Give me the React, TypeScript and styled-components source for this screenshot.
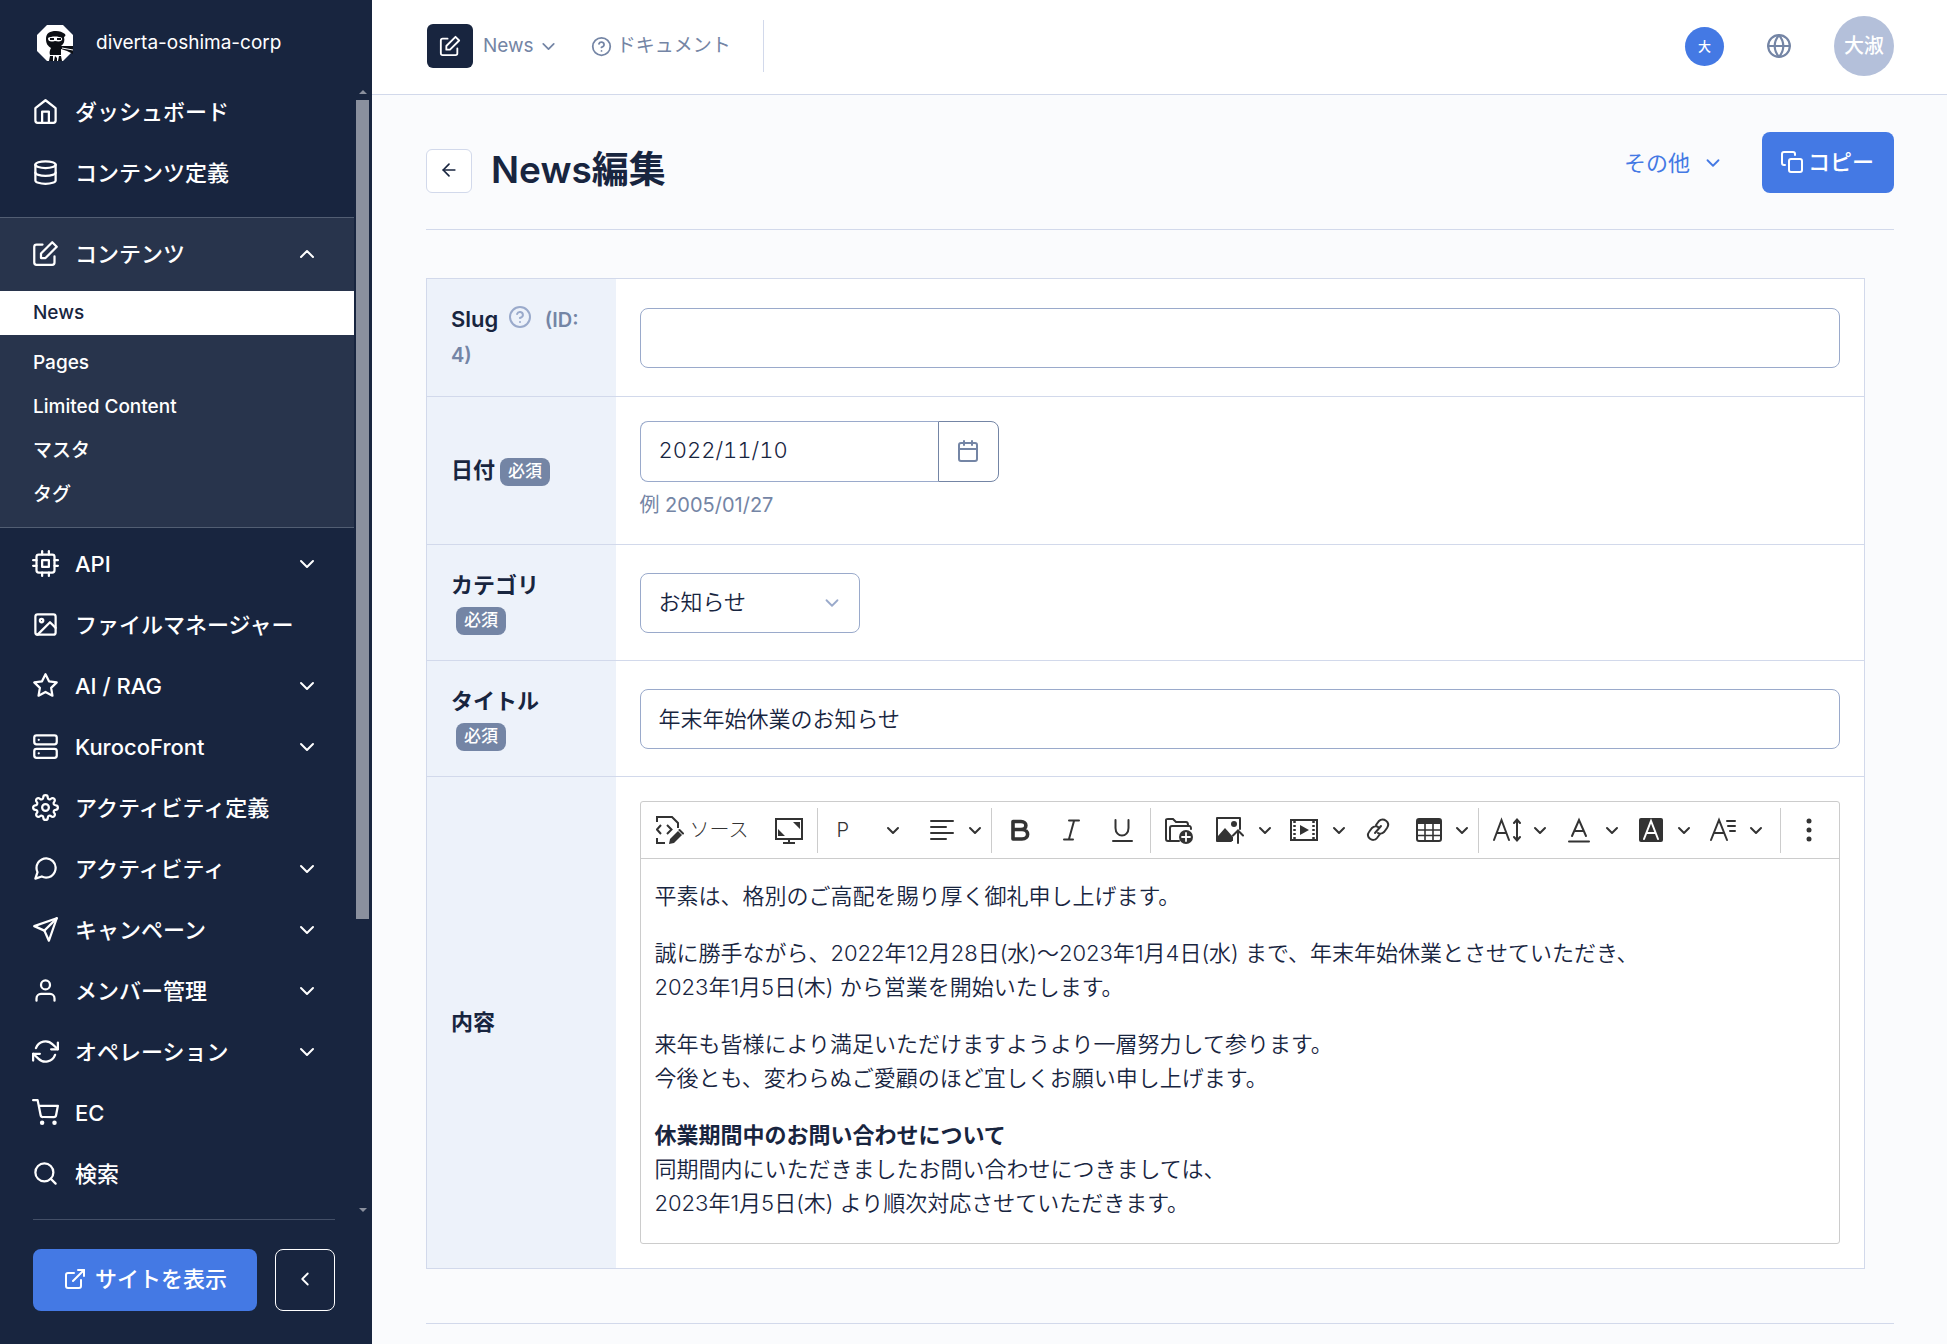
import React from "react";
import styled, { createGlobalStyle, css } from "styled-components";
import {
  FiArrowLeft,
  FiCalendar,
  FiChevronDown,
  FiChevronLeft,
  FiChevronUp,
  FiCopy,
  FiCpu,
  FiDatabase,
  FiExternalLink,
  FiGlobe,
  FiHelpCircle,
  FiHome,
  FiImage,
  FiMessageCircle,
  FiRefreshCw,
  FiSearch,
  FiSend,
  FiServer,
  FiSettings,
  FiShoppingCart,
  FiStar,
  FiUser,
} from "react-icons/fi";

const color = {
  navy: "#18253f",
  navyLight: "#28344c",
  blue: "#4479e4",
  slate: "#7485a5",
  line: "#d2d9eb",
  field: "#9aaacb",
  page: "#fafbfd",
  labelBg: "#edf2fa",
  editorLine: "#cccccc",
  tool: "#333333",
};

const GlobalStyle = createGlobalStyle`
  *, *::before, *::after { box-sizing: border-box; }
  body {
    margin: 0;
    background: ${color.page};
    color: ${color.navy};
    font-family: Inter, "Noto Sans CJK JP", sans-serif;
    font-size: 22px;
    line-height: 34px;
  }
  button, input, select { font: inherit; color: inherit; }
  button { cursor: pointer; }
  a { color: inherit; text-decoration: none; }
  svg { display: block; flex: none; }
`;

const Layout = styled.div`
  display: grid;
  grid-template-columns: 372px minmax(0, 1fr);
  min-height: 100vh;
`;

/* ---------- Sidebar ---------- */

const Sidebar = styled.aside`
  position: sticky;
  top: 0;
  height: 100vh;
  display: flex;
  flex-direction: column;
  background: ${color.navy};
  color: #fff;
`;

const Brand = styled.a`
  display: flex;
  align-items: center;
  gap: 22px;
  flex: none;
  height: 82px;
  padding: 4px 36px 0;
  font-size: 19px;
  line-height: 28px;
`;

const NavArea = styled.div`
  display: flex;
  flex: 1;
  min-height: 0;
`;

const Nav = styled.nav`
  flex: 1;
  min-width: 0;
  overflow: hidden;
  font-weight: 500;
`;

const NavRow = styled.a<{ $tall?: boolean }>`
  display: flex;
  align-items: center;
  gap: 16px;
  height: ${(p) => (p.$tall ? 73 : 61)}px;
  padding: 0 35px 2px 32px;
  svg:first-child { width: 27px; height: 27px; }
  svg:last-child:not(:first-child) { width: 24px; height: 24px; }
`;

const NavText = styled.span`
  flex: 1;
  white-space: nowrap;
`;

const OpenSection = styled.section`
  margin: 13px 0 6px;
  padding-bottom: 10px;
  background: ${color.navyLight};
  border-top: 1px solid #525e73;
  border-bottom: 1px solid #525e73;
`;

const SubLink = styled.a<{ $active?: boolean }>`
  display: block;
  padding: 0 33px;
  font-size: 19px;
  line-height: 44px;
  ${(p) =>
    p.$active &&
    css`
      margin-bottom: 6px;
      background: #fff;
      color: ${color.navy};
    `}
`;

const ScrollTrack = styled.div`
  display: flex;
  flex-direction: column;
  align-items: center;
  width: 18px;
  padding: 8px 2px 7px 1px;
`;

const ScrollThumb = styled.div`
  width: 13px;
  height: 73%;
  margin: 6px 0 auto;
  background: #8a909e;
`;

const SidebarFooter = styled.footer`
  display: flex;
  gap: 18px;
  flex: none;
  margin: 0 37px 0 33px;
  padding: 29px 0 33px;
  border-top: 1px solid #434f67;
`;

const PrimaryLink = styled.a`
  display: flex;
  align-items: center;
  justify-content: center;
  gap: 8px;
  flex: 1;
  height: 62px;
  padding-bottom: 2px;
  border-radius: 8px;
  background: ${color.blue};
  font-weight: 500;
`;

const CollapseButton = styled.button`
  display: grid;
  place-items: center;
  width: 60px;
  height: 62px;
  padding: 0 0 2px;
  border: 1px solid #fff;
  border-radius: 8px;
  background: transparent;
`;

/* ---------- Top bar ---------- */

const Main = styled.div`
  min-width: 0;
`;

const TopBar = styled.header`
  display: flex;
  align-items: center;
  justify-content: space-between;
  height: 95px;
  padding: 0 53px 2px 55px;
  border-bottom: 1px solid ${color.line};
  background: #fff;
  color: ${color.slate};
  font-size: 19px;
`;

const TopGroup = styled.div<{ $gap: number }>`
  display: flex;
  align-items: center;
  gap: ${(p) => p.$gap}px;
`;

const AppBadge = styled.span`
  display: grid;
  place-items: center;
  width: 46px;
  height: 44px;
  border-radius: 6px;
  background: ${color.navy};
  color: #fff;
`;

const PlainButton = styled.button`
  display: flex;
  align-items: center;
  gap: 4px;
  padding: 0;
  border: 0;
  background: none;
`;

const DocLink = styled.a`
  display: flex;
  align-items: center;
  gap: 5px;
  height: 52px;
  padding-right: 32px;
  border-right: 1px solid ${color.line};
`;

const Circle = styled.button<{ $size: number; $bg: string; $font: number }>`
  display: grid;
  place-items: center;
  width: ${(p) => p.$size}px;
  height: ${(p) => p.$size}px;
  padding: 0;
  border: 0;
  border-radius: 50%;
  background: ${(p) => p.$bg};
  color: #fff;
  font-size: ${(p) => p.$font}px;
  font-weight: 500;
  line-height: 24px;
`;

/* ---------- Page ---------- */

const Page = styled.main`
  padding: 37px 53px 19px 54px;
`;

const PageHead = styled.div`
  display: flex;
  align-items: flex-end;
  justify-content: space-between;
  padding-bottom: 36px;
  border-bottom: 1px solid ${color.line};
`;

const TitleGroup = styled.div`
  display: flex;
  align-items: center;
  gap: 19px;
`;

const BackButton = styled.button`
  display: grid;
  place-items: center;
  width: 46px;
  height: 44px;
  padding: 0 0 2px;
  border: 1px solid ${color.line};
  border-radius: 6px;
  background: #fff;
`;

const Title = styled.h1`
  margin: 0;
  padding-bottom: 2px;
  font-size: 37px;
  font-weight: 600;
  line-height: 42px;
`;

const Actions = styled.div`
  display: flex;
  align-items: center;
  gap: 38px;
`;

const OtherButton = styled(PlainButton)`
  gap: 12px;
  color: ${color.blue};
`;

const CopyButton = styled.button`
  display: flex;
  align-items: center;
  gap: 4px;
  height: 61px;
  padding: 0 20px 2px 18px;
  border: 0;
  border-radius: 8px;
  background: ${color.blue};
  color: #fff;
  font-weight: 500;
`;

const FormArea = styled.form`
  padding: 48px 29px 54px 0;
  border-bottom: 1px solid ${color.line};
`;

const FormTable = styled.table`
  width: 100%;
  table-layout: fixed;
  border-collapse: collapse;
  border: 1px solid ${color.line};
  background: #fff;
`;

const LabelCell = styled.th`
  width: 189px;
  padding: 23px 24px 24px;
  border-bottom: 1px solid ${color.line};
  background: ${color.labelBg};
  font-weight: 600;
  text-align: left;
  vertical-align: middle;
`;

const ValueCell = styled.td`
  padding: 24px;
  border-bottom: 1px solid ${color.line};
  vertical-align: middle;
`;

const Required = styled.span`
  display: inline-block;
  height: 28px;
  margin-left: 5px;
  padding: 0 8px;
  border-radius: 8px;
  background: ${color.slate};
  color: #fff;
  font-size: 17px;
  font-weight: 500;
  line-height: 27px;
  vertical-align: middle;
`;

const Help = styled.span`
  display: inline-block;
  margin: 0 7px 0 10px;
  padding-top: 2px;
  color: ${color.field};
  vertical-align: -2px;
`;

const IdNote = styled.span`
  color: ${color.slate};
  font-size: 20px;
`;

const fieldBox = css`
  height: 60px;
  border: 1px solid ${color.field};
  border-radius: 8px;
  background: #fff;
  outline: none;
`;

const TextInput = styled.input`
  ${fieldBox}
  display: block;
  width: 100%;
  padding: 0 18px 4px;
  font-weight: 350;
  font-variant-numeric: tabular-nums;
`;

const DateGroup = styled.div`
  display: flex;
  width: 359px;
`;

const DateInput = styled(TextInput)`
  flex: 1;
  min-width: 0;
  height: 61px;
  border-right: 0;
  border-radius: 8px 0 0 8px;
`;

const DateButton = styled.button`
  display: grid;
  place-items: center;
  width: 61px;
  height: 61px;
  padding: 0 0 2px;
  border: 1px solid ${color.slate};
  border-radius: 0 8px 8px 0;
  background: #fff;
  color: ${color.slate};
`;

const Hint = styled.p`
  margin: 8px 0 0;
  color: ${color.slate};
  font-size: 20px;
  line-height: 30px;
`;

const SelectWrap = styled.div`
  position: relative;
  width: 220px;
  svg {
    position: absolute;
    top: 19px;
    right: 17px;
    color: ${color.field};
    pointer-events: none;
  }
`;

const Select = styled.select`
  ${fieldBox}
  width: 100%;
  padding: 0 18px 2px;
  appearance: none;
  display: block;
  font-weight: 350;
`;

/* ---------- Editor ---------- */

const Editor = styled.div`
  border: 1px solid ${color.editorLine};
  border-radius: 3px;
`;

const Toolbar = styled.div`
  display: flex;
  align-items: center;
  gap: 1px;
  height: 57px;
  padding: 0 5px 0 4px;
  border-bottom: 1px solid ${color.editorLine};
  color: ${color.tool};
`;

const ToolButton = styled.button<{ $width: number; $gap?: number }>`
  display: flex;
  align-items: center;
  gap: ${(p) => p.$gap ?? 6}px;
  flex: none;
  width: ${(p) => p.$width}px;
  height: 45px;
  padding: 0 0 0 11px;
  border: 0;
  background: none;
  font-size: 20px;
  font-weight: 300;
`;

const HeadingButton = styled(ToolButton)`
  justify-content: space-between;
  padding: 0 12px 0 16px;
`;

const Separator = styled.span<{ $end?: boolean }>`
  flex: none;
  width: 1px;
  height: 45px;
  margin: 0 2px;
  margin-left: ${(p) => (p.$end ? "auto" : "2px")};
  background: ${color.editorLine};
`;

const EditorBody = styled.div`
  padding: 20px 14px 0;
  font-weight: 350;
  outline: none;
  p { margin: 0 0 23px; }
  strong { font-weight: 700; }
`;

/* ---------- Icons ---------- */

const EditIcon = ({ size = 24 }: { size?: number }) => (
  <svg width={size} height={size} viewBox="0 0 24 24" fill="none" stroke="currentColor" strokeWidth="2" strokeLinecap="round" strokeLinejoin="round">
    <path d="M20 14.66V20a2 2 0 0 1-2 2H4a2 2 0 0 1-2-2V6a2 2 0 0 1 2-2h5.34" />
    <polygon points="18 2 22 6 12 16 8 16 8 12" />
  </svg>
);

const Logo = () => (
  <svg width="38" height="38" viewBox="0 0 38 38" aria-hidden="true">
    <path d="M11 1H27L37 11V27L27 37H11L1 27V11Z" fill="#fff" />
    <path d="M10 15C10 9 14 7 20 7C24 7 26 8 29 10C30 12 29 12 28 13C29 17 28 20 25 22L37 22V30L31 27L25 25V31H14C13 28 14 26 15 24C12 22 10 20 10 15Z" fill="#0c0f14" />
    <path d="M12 14C15 12 23 12 26 14C27 17 24 18 19 17C15 18 12 18 12 14Z" fill="#fff" />
    <path d="M14 15h4M21 15h4" stroke="#0c0f14" strokeWidth="2" />
    <path d="M26 24L37 26" stroke="#fff" strokeWidth="1" />
    <path d="M13 37L14 32H17V37ZM18 37L19 32L21 34V37ZM22 37L23 32H25L26 37Z" fill="#0c0f14" />
  </svg>
);

const ScrollArrow = ({ down }: { down?: boolean }) => (
  <svg width="8" height="4" viewBox="0 0 8 4" fill="#8a909e" aria-hidden="true">
    <path d={down ? "M0 0H8L4 4Z" : "M0 4H8L4 0Z"} />
  </svg>
);

const Glyph = ({ children }: { children: React.ReactNode }) => (
  <svg width="28" height="28" viewBox="0 0 28 28" fill="none" stroke="currentColor" strokeWidth="2" strokeLinecap="round" aria-hidden="true">
    {children}
  </svg>
);

const Caret = () => (
  <svg width="22" height="18" viewBox="0 0 22 18" fill="none" stroke="currentColor" strokeWidth="2" strokeLinecap="round" strokeLinejoin="round" aria-hidden="true">
    <path d="M6 7L11 12L16 7" />
  </svg>
);

const icons = {
  source: (
    <Glyph>
      <path d="M1 6V1H16L22 7V12M1 22V27H9" strokeLinecap="butt" />
      <path d="M5 9L1 13.5L5 18M11 9L15.500 13.500L11 18" strokeLinecap="butt" />
      <path d="M13 28L14 23L22 15L26 19L18 27Z" fill="currentColor" stroke="none" />
      <path d="M23.500 14L27 17.500" />
    </Glyph>
  ),
  monitor: (
    <Glyph>
      <rect x="1" y="3" width="26" height="20" />
      <path d="M18 6H25V13ZM3 13L10 20H3Z" fill="currentColor" stroke="none" />
      <path d="M14 22V26M8 27H20" strokeLinecap="butt" />
    </Glyph>
  ),
  align: (
    <Glyph>
      <path d="M3 5H25M3 11H18M3 17H25M3 23H18" />
    </Glyph>
  ),
  bold: (
    <Glyph>
      <path d="M7 5.500H15C21.500 5.500 21.500 13.500 15 13.500H7M7 13.500H16C23.500 13.500 23.500 23 16 23H7V5.500" strokeWidth="3.600" strokeLinejoin="round" />
    </Glyph>
  ),
  italic: (
    <Glyph>
      <path d="M12 4.500H22M7 23.500H16M17 5L12 23" />
    </Glyph>
  ),
  underline: (
    <Glyph>
      <path d="M7.500 4V12C7.500 22 20.500 22 20.500 12V4M5 25H24" />
    </Glyph>
  ),
  folder: (
    <Glyph>
      <path d="M14 25H3C1 25 1 24 1 23V4C1 3 2 3 3 3H8L11 6H21C23 6 23 8 23 9" />
      <path d="M5 24V12C5 10 6 10 7 10H24C26 10 26 11 26 13" />
      <circle cx="21" cy="21" r="7" fill="currentColor" stroke="none" />
      <path d="M21 17V25M17 21H25" stroke="#fff" strokeWidth="1.800" />
    </Glyph>
  ),
  image: (
    <Glyph>
      <path d="M15 25H1V2H24V13" strokeLinejoin="round" />
      <circle cx="18" cy="8" r="3" fill="currentColor" stroke="none" />
      <path d="M2 20L9 12L17 21V25H2Z" fill="currentColor" stroke="none" />
      <path d="M22 27V15M17 19.500L22 14.500L27 19.500" />
    </Glyph>
  ),
  video: (
    <Glyph>
      <rect x="1" y="4" width="26" height="20" />
      <path d="M4.500 5V23M23.500 5V23" strokeDasharray="2 2" strokeLinecap="butt" strokeWidth="2.500" />
      <path d="M10 9L19 14L10 19Z" fill="currentColor" stroke="none" />
    </Glyph>
  ),
  link: (
    <Glyph>
      <path d="M12 9L15 5C19 1 27 6 23 12L20 16C18 18 15 18 14 17M16 18L13 22C9 27 1 21 5 16L8 12C10 10 13 10 14 11M11 17L17 10" />
    </Glyph>
  ),
  table: (
    <Glyph>
      <rect x="2" y="3" width="24" height="22" rx="2" />
      <path d="M3 4H25V7H3Z" fill="currentColor" />
      <path d="M10 8V25M18 8V25M2 14H26M2 19.500H26" strokeWidth="1.600" />
    </Glyph>
  ),
  fontSize: (
    <Glyph>
      <path d="M1 24L8.500 4L16 24M4 17H13M24 4V24M21 7L24 3.500L27 7M21 21L24 24.500L27 21" />
    </Glyph>
  ),
  fontColor: (
    <Glyph>
      <path d="M7 20L14 4L21 20M9.500 15H18.500M4 25.500H24" />
    </Glyph>
  ),
  fontBackground: (
    <Glyph>
      <rect x="2" y="2" width="24" height="24" rx="2" fill="currentColor" stroke="none" />
      <path d="M7 23L14 5L21 23M9.500 17H18.500" stroke="#fff" />
    </Glyph>
  ),
  style: (
    <Glyph>
      <path d="M2 24L10 4L18 24M5 17H15M18 5H26M19 10H26M21 15H26" />
    </Glyph>
  ),
  more: (
    <Glyph>
      <g fill="currentColor" stroke="none">
        <circle cx="14" cy="5" r="2.500" />
        <circle cx="14" cy="14" r="2.500" />
        <circle cx="14" cy="23" r="2.500" />
      </g>
    </Glyph>
  ),
};

/* ---------- Data ---------- */

const submenu = ["News", "Pages", "Limited Content", "マスタ", "タグ"];

const topItems = [
  { label: "ダッシュボード", icon: <FiHome /> },
  { label: "コンテンツ定義", icon: <FiDatabase /> },
];

const bottomItems = [
  { label: "API", icon: <FiCpu />, menu: true },
  { label: "ファイルマネージャー", icon: <FiImage /> },
  { label: "AI / RAG", icon: <FiStar />, menu: true },
  { label: "KurocoFront", icon: <FiServer />, menu: true },
  { label: "アクティビティ定義", icon: <FiSettings /> },
  { label: "アクティビティ", icon: <FiMessageCircle />, menu: true },
  { label: "キャンペーン", icon: <FiSend />, menu: true },
  { label: "メンバー管理", icon: <FiUser />, menu: true },
  { label: "オペレーション", icon: <FiRefreshCw />, menu: true },
  { label: "EC", icon: <FiShoppingCart /> },
  { label: "検索", icon: <FiSearch /> },
];

interface ToolProps {
  label: string;
  icon: React.ReactNode;
  drop?: boolean;
  wide?: boolean;
}

const Tool = ({ label, icon, drop, wide }: ToolProps) => (
  <ToolButton type="button" aria-label={label} $width={wide ? 73 : drop ? 71 : 50} $gap={wide ? 10 : 8}>
    {icon}
    {drop && <Caret />}
  </ToolButton>
);

export default function App() {
  return (
    <>
      <GlobalStyle />
      <Layout>
        <Sidebar>
          <Brand href="#">
            <Logo />
            <span>diverta-oshima-corp</span>
          </Brand>
          <NavArea>
            <Nav>
              {topItems.map((item) => (
                <NavRow href="#" key={item.label}>
                  {item.icon}
                  <NavText>{item.label}</NavText>
                </NavRow>
              ))}
              <OpenSection>
                <NavRow href="#" $tall>
                  <EditIcon />
                  <NavText>コンテンツ</NavText>
                  <FiChevronUp />
                </NavRow>
                {submenu.map((label, i) => (
                  <SubLink href="#" key={label} $active={i === 0}>
                    {label}
                  </SubLink>
                ))}
              </OpenSection>
              {bottomItems.map((item) => (
                <NavRow href="#" key={item.label}>
                  {item.icon}
                  <NavText>{item.label}</NavText>
                  {item.menu && <FiChevronDown />}
                </NavRow>
              ))}
            </Nav>
            <ScrollTrack>
              <ScrollArrow />
              <ScrollThumb />
              <ScrollArrow down />
            </ScrollTrack>
          </NavArea>
          <SidebarFooter>
            <PrimaryLink href="#">
              <FiExternalLink size={24} />
              <span>サイトを表示</span>
            </PrimaryLink>
            <CollapseButton type="button" aria-label="メニューを閉じる">
              <FiChevronLeft size={22} />
            </CollapseButton>
          </SidebarFooter>
        </Sidebar>

        <Main>
          <TopBar>
            <TopGroup $gap={32}>
              <TopGroup $gap={10}>
                <AppBadge>
                  <EditIcon size={22} />
                </AppBadge>
                <PlainButton type="button">
                  News
                  <FiChevronDown size={21} />
                </PlainButton>
              </TopGroup>
              <DocLink href="#">
                <FiHelpCircle size={21} />
                ドキュメント
              </DocLink>
            </TopGroup>
            <TopGroup $gap={42}>
              <Circle type="button" $size={39} $bg={color.blue} $font={13}>
                大
              </Circle>
              <PlainButton type="button" aria-label="言語">
                <FiGlobe size={26} />
              </PlainButton>
              <Circle type="button" $size={60} $bg="#b4c0da" $font={20}>
                大淑
              </Circle>
            </TopGroup>
          </TopBar>

          <Page>
            <PageHead>
              <TitleGroup>
                <BackButton type="button" aria-label="戻る">
                  <FiArrowLeft size={20} />
                </BackButton>
                <Title>News編集</Title>
              </TitleGroup>
              <Actions>
                <OtherButton type="button">
                  その他
                  <FiChevronDown size={22} />
                </OtherButton>
                <CopyButton type="button">
                  <FiCopy size={24} />
                  コピー
                </CopyButton>
              </Actions>
            </PageHead>

            <FormArea>
              <FormTable>
                <tbody>
                  <tr>
                    <LabelCell scope="row">
                      <label htmlFor="slug">Slug</label>
                      <Help>
                        <FiHelpCircle size={24} />
                      </Help>{" "}
                      <IdNote>(ID:</IdNote> <IdNote>4)</IdNote>
                    </LabelCell>
                    <ValueCell>
                      <TextInput id="slug" type="text" />
                    </ValueCell>
                  </tr>
                  <tr>
                    <LabelCell scope="row">
                      <label htmlFor="date">日付</label>
                      <Required>必須</Required>
                    </LabelCell>
                    <ValueCell>
                      <DateGroup>
                        <DateInput id="date" type="text" defaultValue="2022/11/10" />
                        <DateButton type="button" aria-label="カレンダー">
                          <FiCalendar size={24} />
                        </DateButton>
                      </DateGroup>
                      <Hint>例 2005/01/27</Hint>
                    </ValueCell>
                  </tr>
                  <tr>
                    <LabelCell scope="row">
                      <label htmlFor="category">カテゴリ</label>
                      <Required>必須</Required>
                    </LabelCell>
                    <ValueCell>
                      <SelectWrap>
                        <Select id="category" defaultValue="news">
                          <option value="news">お知らせ</option>
                        </Select>
                        <FiChevronDown size={22} />
                      </SelectWrap>
                    </ValueCell>
                  </tr>
                  <tr>
                    <LabelCell scope="row">
                      <label htmlFor="title">タイトル</label>
                      <Required>必須</Required>
                    </LabelCell>
                    <ValueCell>
                      <TextInput id="title" type="text" defaultValue="年末年始休業のお知らせ" />
                    </ValueCell>
                  </tr>
                  <tr>
                    <LabelCell scope="row" id="body-label">
                      内容
                    </LabelCell>
                    <ValueCell>
                      <Editor>
                        <Toolbar role="toolbar">
                          <ToolButton type="button" $width={118}>
                            {icons.source}
                            ソース
                          </ToolButton>
                          <Tool label="全画面" icon={icons.monitor} />
                          <Separator />
                          <HeadingButton type="button" $width={95}>
                            P
                            <Caret />
                          </HeadingButton>
                          <Tool label="配置" icon={icons.align} drop />
                          <Separator />
                          <Tool label="太字" icon={icons.bold} />
                          <Tool label="斜体" icon={icons.italic} />
                          <Tool label="下線" icon={icons.underline} />
                          <Separator />
                          <Tool label="ファイル" icon={icons.folder} />
                          <Tool label="画像" icon={icons.image} drop wide />
                          <Tool label="動画" icon={icons.video} drop wide />
                          <Tool label="リンク" icon={icons.link} />
                          <Tool label="表" icon={icons.table} drop />
                          <Separator />
                          <Tool label="文字サイズ" icon={icons.fontSize} drop />
                          <Tool label="文字色" icon={icons.fontColor} drop />
                          <Tool label="背景色" icon={icons.fontBackground} drop />
                          <Tool label="スタイル" icon={icons.style} drop />
                          <Separator $end />
                          <Tool label="その他の項目" icon={icons.more} />
                        </Toolbar>
                        <EditorBody
                          contentEditable
                          suppressContentEditableWarning
                          role="textbox"
                          aria-multiline="true"
                          aria-labelledby="body-label"
                          spellCheck={false}
                        >
                          <p>平素は、格別のご高配を賜り厚く御礼申し上げます。</p>
                          <p>
                            誠に勝手ながら、2022年12月28日(水)～2023年1月4日(水) まで、年末年始休業とさせていただき、
                            <br />
                            2023年1月5日(木) から営業を開始いたします。
                          </p>
                          <p>
                            来年も皆様により満足いただけますようより一層努力して参ります。
                            <br />
                            今後とも、変わらぬご愛顧のほど宜しくお願い申し上げます。
                          </p>
                          <p>
                            <strong>休業期間中のお問い合わせについて</strong>
                            <br />
                            同期間内にいただきましたお問い合わせにつきましては、
                            <br />
                            2023年1月5日(木) より順次対応させていただきます。
                          </p>
                        </EditorBody>
                      </Editor>
                    </ValueCell>
                  </tr>
                </tbody>
              </FormTable>
            </FormArea>
          </Page>
        </Main>
      </Layout>
    </>
  );
}
